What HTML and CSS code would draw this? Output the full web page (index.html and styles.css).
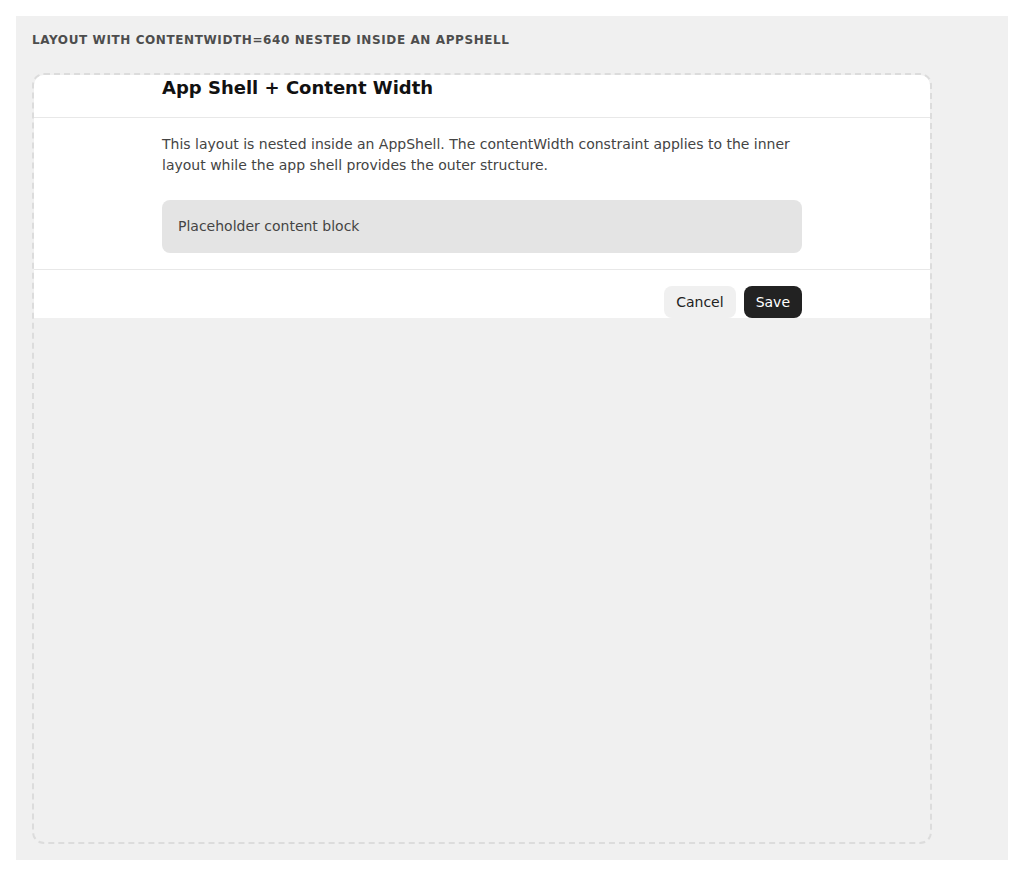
FILE: index.html
```html
<!DOCTYPE html>
<html lang="en">
<head>
<meta charset="utf-8">
<title>AppShell layout demo</title>
<link rel="stylesheet" href="styles.css">
</head>
<body>
  <section class="demo">
    <h2 class="demo-label">Layout with contentWidth=640 nested inside an AppShell</h2>
    <div class="shell">
      <div class="layout">
        <header class="layout-header">
          <div class="constrain">
            <h1 class="layout-title">App Shell + Content Width</h1>
          </div>
        </header>
        <main class="layout-body">
          <div class="constrain">
            <p class="layout-text">This layout is nested inside an AppShell. The contentWidth constraint applies to the inner layout while the app shell provides the outer structure.</p>
            <div class="placeholder">Placeholder content block</div>
          </div>
        </main>
        <footer class="layout-footer">
          <div class="constrain actions">
            <button class="btn btn-secondary" type="button">Cancel</button>
            <button class="btn btn-primary" type="button">Save</button>
          </div>
        </footer>
      </div>
    </div>
  </section>
</body>
</html>
```
FILE: styles.css
```css
* {
  box-sizing: border-box;
}

html, body {
  margin: 0;
  background: #ffffff;
}

body {
  padding: 16px;
  font-family: "DejaVu Sans", "Liberation Sans", sans-serif;
  color: #222;
}

.demo {
  background: #f0f0f0;
  padding: 16px;
  height: 844px;
  display: flex;
  flex-direction: column;
}

.demo-label {
  margin: 0 0 25px;
  font-size: 12px;
  line-height: 16px;
  font-weight: 700;
  text-transform: uppercase;
  letter-spacing: 0.6px;
  color: #4d4d4d;
}

.shell {
  flex: 1;
  width: 900px;
  border: 2px dashed #dcdcdc;
  border-radius: 12px;
  overflow: hidden;
}

.layout {
  background: #ffffff;
}

.constrain {
  width: 640px;
  margin: 0 auto;
}

.layout-header {
  padding: 0 0 17px;
  border-bottom: 1px solid #e8e8e8;
}

.layout-title {
  margin: 0;
  font-size: 18px;
  line-height: 25px;
  font-weight: 700;
  color: #111;
}

.layout-body {
  padding: 16px 0;
  border-bottom: 1px solid #e8e8e8;
}

.layout-text {
  margin: 0 0 24px;
  font-size: 14px;
  line-height: 21px;
  color: #444;
}

.placeholder {
  background: #e4e4e4;
  border-radius: 8px;
  padding: 16px;
  font-size: 14px;
  line-height: 21px;
  color: #444;
}

.layout-footer {
  padding: 16px 0 0;
}

.actions {
  display: flex;
  justify-content: flex-end;
  gap: 8px;
}

.btn {
  height: 32px;
  padding: 0 12px;
  border: none;
  border-radius: 8px;
  font-family: inherit;
  font-size: 14px;
  line-height: 32px;
}

.btn-secondary {
  background: #f0f0f0;
  color: #222;
}

.btn-primary {
  background: #222222;
  color: #ffffff;
}
```
